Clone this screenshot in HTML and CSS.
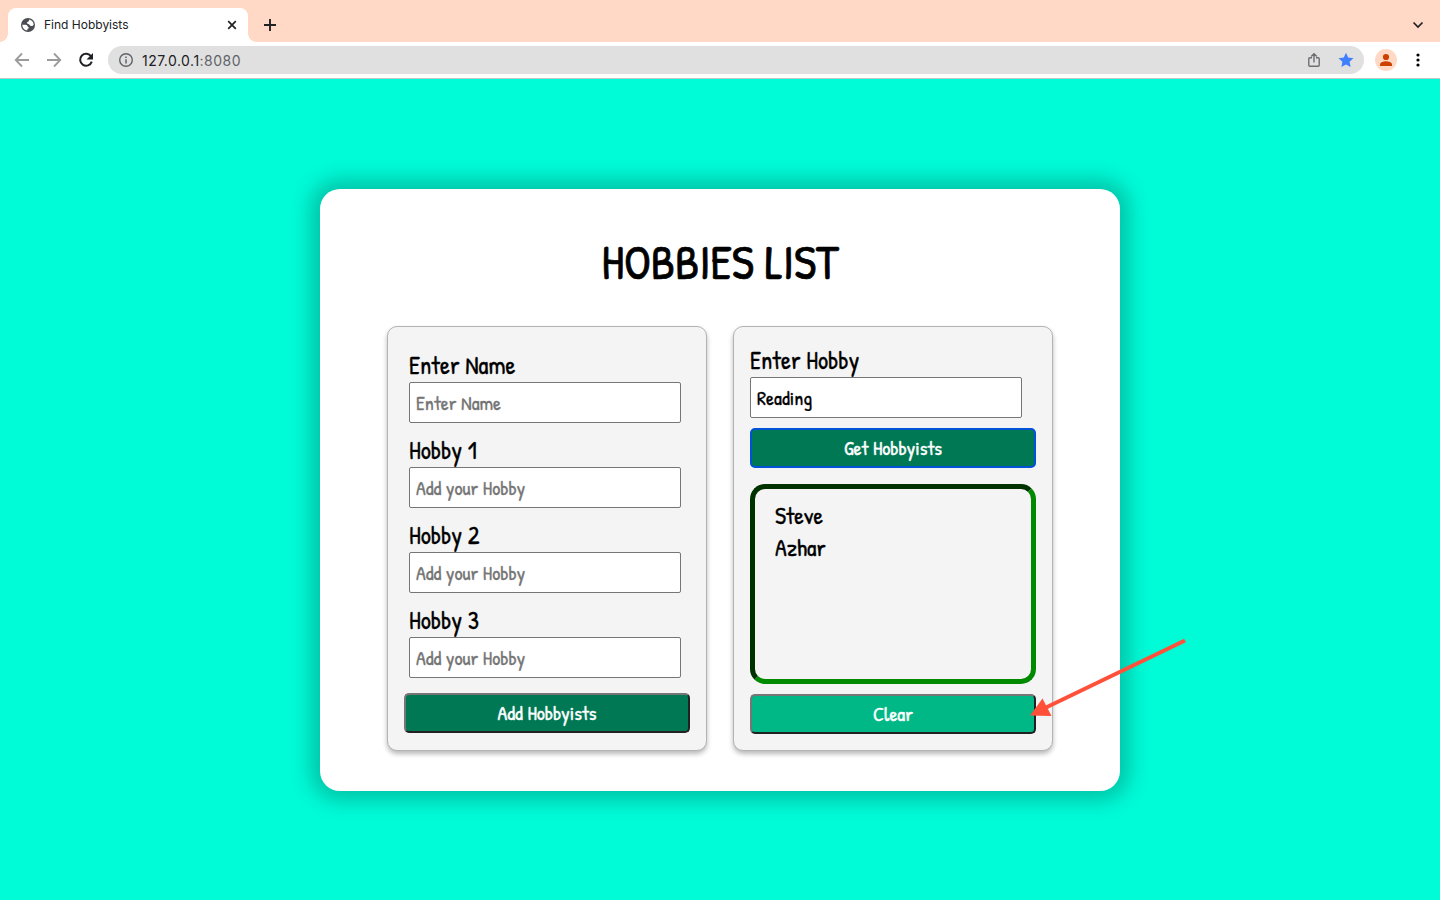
FILE: index.html
```
<!DOCTYPE html>
<html lang="en">
<head>
<meta charset="utf-8">
<title>Find Hobbyists</title>
<link rel="stylesheet" href="styles.css">
</head>
<body>
<header class="browser">
  <div class="tabstrip">
    <div class="tab">
      <svg class="favicon" width="14" height="14" viewBox="0 0 14 14"><circle cx="7" cy="7" r="7" fill="#4a4d52"/><path d="M1.300 6.700H4.500C6.300 6.700 6.200 8.300 7 8.700s1.200 1.300.2 1.900-1 1.100-.8 1.900C3.600 12.300 1.300 9.900 1.300 6.700zM8.300 1.500c2.400.5 4.200 2.600 4.400 5.200-.6 1.100-1.600 1.300-2.700 1.200S8.800 6.700 7.900 6.200 5.900 5.700 6 4.700s1-.9 1.500-1.300S8 2.300 8.300 1.500z" fill="#fff"/></svg>
      <span class="tab-title">Find Hobbyists</span>
      <svg class="tab-close" width="10" height="10" viewBox="0 0 10 10"><path d="M1.200 1.200l7.600 7.600M8.800 1.200L1.200 8.800" stroke="#202124" stroke-width="1.700"/></svg>
    </div>
    <svg class="new-tab" width="14" height="14" viewBox="0 0 14 14"><path d="M7 1v12M1 7h12" stroke="#202124" stroke-width="1.900"/></svg>
    <svg class="tab-search" width="12" height="8" viewBox="0 0 12 8"><path d="M1.500 1.500L6 6l4.500-4.500" fill="none" stroke="#202124" stroke-width="1.700"/></svg>
  </div>
  <div class="toolbar">
    <svg width="16" height="16" viewBox="0 0 16 16"><path d="M15 8H2M8 1.500L1.700 8 8 14.500" fill="none" stroke="#9b9b9b" stroke-width="1.800"/></svg>
    <svg width="16" height="16" viewBox="0 0 16 16"><path d="M1 8h13M8 1.500L14.300 8 8 14.500" fill="none" stroke="#9b9b9b" stroke-width="1.800"/></svg>
    <svg width="16" height="16" viewBox="0 0 16 16"><path d="M13.200 4.500A6 6 0 1 0 13.800 9.700" fill="none" stroke="#202124" stroke-width="2"/><path d="M15 1v6.500H8.500z" fill="#202124"/></svg>
    <div class="omnibox">
      <svg width="16" height="16" viewBox="0 0 16 16"><circle cx="8" cy="8" r="6.300" fill="none" stroke="#5f6368" stroke-width="1.400"/><path d="M8 7.200v4.200M8 4.400v1.600" stroke="#5f6368" stroke-width="1.500"/></svg>
      <span class="url">127.0.0.1<span class="port">:8080</span></span>
      <svg class="share" width="12" height="16" viewBox="0 0 12 16"><path d="M4 5.700H1.800q-1 0-1 1v6.600q0 1 1 1h8.400q1 0 1-1V6.700q0-1-1-1H8M6 10.500V2M3.200 4.500L6 1.700l2.800 2.800" fill="none" stroke="#6b6e72" stroke-width="1.400"/></svg>
      <svg class="star" width="16" height="16" viewBox="0 0 16 16"><path d="M8 .8l2.200 4.800 5.300.6-3.900 3.600 1 5.200L8 12.400l-4.600 2.600 1-5.200L.5 6.200l5.300-.6z" fill="#4080ff"/></svg>
    </div>
    <svg class="profile" width="22" height="22" viewBox="0 0 22 22"><circle cx="11" cy="11" r="11" fill="#ffd9c6"/><circle cx="11" cy="8" r="3.100" fill="#cc4100"/><path d="M5 17v-1.500C5 13.300 8.500 12.300 11 12.300s6 1 6 3.200V17z" fill="#cc4100"/></svg>
    <svg class="menu" width="4" height="14" viewBox="0 0 4 14"><circle cx="2" cy="2" r="1.600"/><circle cx="2" cy="7" r="1.600"/><circle cx="2" cy="12" r="1.600"/></svg>
  </div>
</header>

<main class="page">
  <section class="card">
    <h1>HOBBIES LIST</h1>
    <div class="panels">
      <form class="panel add">
        <label class="field">Enter Name<input type="text" placeholder="Enter Name"></label>
        <label class="field">Hobby 1<input type="text" placeholder="Add your Hobby"></label>
        <label class="field">Hobby 2<input type="text" placeholder="Add your Hobby"></label>
        <label class="field">Hobby 3<input type="text" placeholder="Add your Hobby"></label>
        <button type="button" class="button">Add Hobbyists</button>
      </form>
      <form class="panel find">
        <label class="field">Enter Hobby<input type="text" value="Reading"></label>
        <button type="button" class="button focused">Get Hobbyists</button>
        <div class="results">
          <div>Steve</div>
          <div>Azhar</div>
        </div>
        <button type="button" class="button clear">Clear</button>
      </form>
    </div>
  </section>
</main>
<svg class="arrow" width="160" height="84" viewBox="0 0 160 84"><path d="M155 5.500L16 72.500" stroke="#ff513a" stroke-width="4"/><path d="M0 80.500L12.500 63.500 21.500 81z" fill="#ff513a"/></svg>
</body>
</html>
```
FILE: styles.css
```
* { box-sizing: border-box; }
html, body { margin: 0; height: 100%; overflow: hidden; }
body { display: flex; flex-direction: column; font-family: Inter, sans-serif; }
svg { display: block; flex: none; }

.browser { flex: none; height: 79px; background: #fff; border-bottom: 1px solid #c3c6c9; }
.tabstrip { display: flex; align-items: center; height: 42px; padding: 8px 16px 0 8px; background: #ffd9c6; }
.tab {
  position: relative; display: flex; align-items: center; width: 240px; height: 34px;
  padding: 0 11px 0 13px; background: #fff; border-radius: 8px 8px 0 0;
}
.tab::before, .tab::after { content: ""; position: absolute; bottom: 0; width: 8px; height: 8px; }
.tab::before { left: -8px; background: radial-gradient(circle at 0 0, transparent 7.5px, #fff 8px); }
.tab::after { right: -8px; background: radial-gradient(circle at 100% 0, transparent 7.5px, #fff 8px); }
.tab-title { margin: -1px 0 0 9px; font-size: 12px; color: #202124; }
.tab-close { margin-left: auto; }
.new-tab { margin-left: 15px; }
.tab-search { margin-left: auto; }

.toolbar { display: flex; align-items: center; height: 36px; padding: 0 20px 0 14px; gap: 16px; }
.omnibox { flex: 1; display: flex; align-items: center; height: 28px; margin-left: -2px; padding: 0 10px; border-radius: 14px; background: #e0e0e0; }
.url { margin: 0 0 0 8px; font-size: 14px; letter-spacing: 0.48px; color: #202124; }
.port { color: #5f6368; }
.share { margin-left: auto; }
.star { margin-left: 18px; }
.profile { margin-left: -5px; }
.menu { margin-left: 3px; }

.page {
  flex: 1; display: flex; justify-content: center; align-items: flex-start; padding-top: 110px;
  background: #00fbd7; font-family: "Patrick Hand", Lato, sans-serif; font-size: 24px; line-height: 32px; color: #000;
  -webkit-text-stroke: 0.3px;
}
.card {
  width: 800px; height: 602px; padding-top: 41px; border-radius: 20px;
  background: #fff; box-shadow: 0 0 20px 10px rgba(0, 0, 0, 0.21);
}
h1 { margin: 0 0 32px; font-size: 48px; font-weight: 400; line-height: 64px; text-align: center; -webkit-text-stroke: 0.7px; }
.panels { display: flex; justify-content: center; gap: 26px; }
.panel {
  width: 320px; height: 425px; border: 1px solid #b3b3b3; border-radius: 10px;
  background: #f4f4f4; box-shadow: 0 3px 5px rgba(0, 0, 0, 0.28);
}
.field { display: block; padding-top: 10px; font-size: 25px; line-height: 34px; }
.add { padding: 11px 16px 0; }
.add .field { margin-left: 5px; }
.find { padding: 6px 16px 0; }
input {
  display: block; width: 272px; height: 41px; padding: 1px 6px; font: inherit; font-size: 20px; color: #000;
  border: 1px solid #767676; border-radius: 2px; background: #fff;
  -webkit-text-stroke: 0.3px;
}
input::placeholder { color: #757575; }
.button {
  display: block; width: 286px; height: 40px; padding: 0; font: inherit; font-size: 20px; color: #fff;
  border: 2px solid; border-color: #767676 #212121 #212121 #767676; border-radius: 5px; background: #007854;
  -webkit-text-stroke: 0.4px;
}
.add .button { margin-top: 15px; }
.find .button { margin-top: 10px; }
.button.focused { border-color: #0052d9; }
.button.clear { background: #00b786; }
.results { width: 286px; height: 200px; margin-top: 16px; padding: 10px 20px; border: 5px solid; border-color: #003200 #008a00 #008a00 #003200; border-radius: 15px; }

.arrow { position: absolute; left: 1030px; top: 635px; }
```
